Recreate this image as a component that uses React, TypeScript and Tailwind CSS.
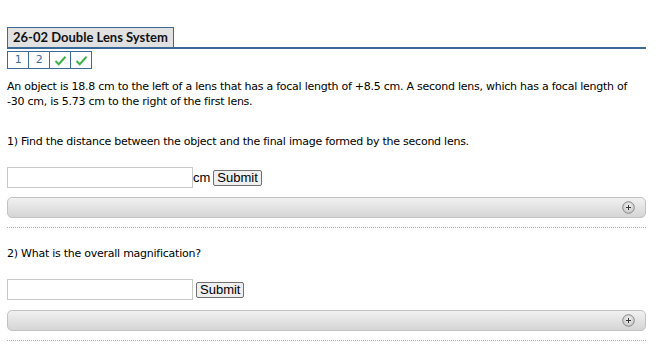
import React from "react";

function PlusIcon() {
    return (
        <svg width="13" height="13" viewBox="0 0 13 13">
            <defs>
                <radialGradient id="pg" cx="50%" cy="40%" r="60%">
                    <stop offset="0%" stopColor="#f4f4f4" />
                    <stop offset="100%" stopColor="#c4c4c4" />
                </radialGradient>
            </defs>
            <circle cx="6.5" cy="6.5" r="5.8" fill="url(#pg)" stroke="#8a8a8a" strokeWidth="1" />
            <path d="M4 6.5h5M6.5 4v5" stroke="#333" strokeWidth="1" />
        </svg>
    );
}

function Check() {
    return (
        <svg width="13" height="11" viewBox="0 0 13 11">
            <path d="M1.5 6l3.2 3.2L11.5 1.8" fill="none" stroke="#3cb44a" strokeWidth="2" />
        </svg>
    );
}

function AnswerRow({ unit }: { unit?: string }) {
    return (
        <div className="flex items-center h-[21px]">
            <input type="text" className="w-[186px] h-[21px] border border-[#c8c8c8] bg-white outline-none" />
            {unit && (
                <span className="text-[13px] tracking-normal text-black font-['Liberation_Sans',Arial,sans-serif]">
                    {unit}
                </span>
            )}
            <button className="ml-[3px] h-[16px] px-[3px] border border-[#707070] bg-[#efefef] rounded-[2px] text-[13px] tracking-normal leading-none text-black font-['Liberation_Sans',Arial,sans-serif]">
                Submit
            </button>
        </div>
    );
}

function HintBar({ top }: { top: string }) {
    return (
        <>
            <div className={top + " h-[21px] rounded-[5px] border border-[#c2c2c2] bg-gradient-to-b from-[#f1f1f1] to-[#d5d5d5] flex items-center justify-end pr-[10px]"}>
                <PlusIcon />
            </div>
            <div className="mt-[9px] border-b border-dotted border-[#b0b0b0]" />
        </>
    );
}

export default function App() {
    return (
        <div className="w-[664px] h-[346px] bg-white overflow-hidden font-['DejaVu_Sans',sans-serif] text-[11px] tracking-[-0.25px] text-black">
            <div className="pl-[7px] pr-[18px] pt-[27px]">
                <div className="flex border-b-2 border-[#3b6a99]">
                    <div className="px-[5px] h-[20px] flex items-center bg-[#e1e1e1] border border-b-0 border-[#3b6a99] font-['Lato',sans-serif] tracking-normal font-bold text-[13px] text-[#111]">
                        26-02 Double Lens System
                    </div>
                </div>
                <div className="flex mt-[2px] h-[18px]">
                    {["1", "2"].map((t) => (
                        <div key={t} className="w-[22px] h-[18px] border border-[#3b6a99] -mr-[1px] flex items-center justify-center text-[#3b6a99]">
                            {t}
                        </div>
                    ))}
                    {[0, 1].map((i) => (
                        <div key={i} className="w-[22px] h-[18px] border border-[#3b6a99] -mr-[1px] flex items-center justify-center">
                            <Check />
                        </div>
                    ))}
                </div>
                <p className="mt-[10px] leading-[15px]">
                    An object is 18.8 cm to the left of a lens that has a focal length of +8.5 cm. A second lens, which has a focal length of -30 cm, is 5.73 cm to the right of the first lens.
                </p>
                <p className="mt-[25px] leading-[15px]">
                    1) Find the distance between the object and the final image formed by the second lens.
                </p>
                <div className="mt-[18px]">
                    <AnswerRow unit="cm" />
                </div>
                <HintBar top="mt-[9px]" />
                <p className="mt-[18px] leading-[15px]">2) What is the overall magnification?</p>
                <div className="mt-[18px]">
                    <AnswerRow />
                </div>
                <HintBar top="mt-[10px]" />
            </div>
        </div>
    );
}
